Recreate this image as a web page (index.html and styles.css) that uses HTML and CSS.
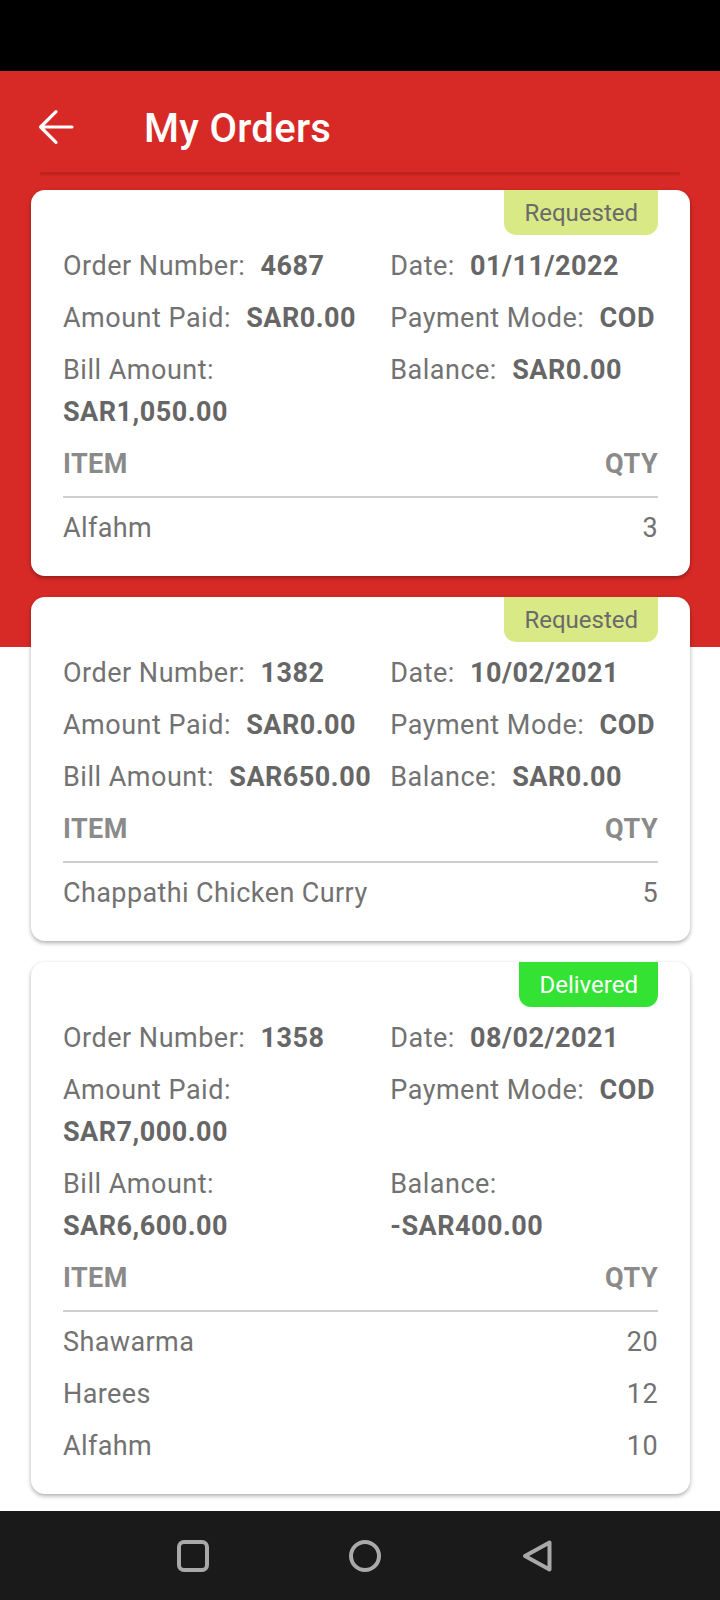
FILE: index.html
```html
<!DOCTYPE html>
<html>
<head>
<meta charset="utf-8">
<link rel="stylesheet" href="styles.css">
</head>
<body>
<div class="statusbar"></div>
<div class="page">
  <div class="appbar">
    <svg class="back" width="48" height="48" viewBox="0 0 24 24"><path d="M20 12H4.6M12 4.3L4.3 12L12 19.7" fill="none" stroke="#fff" stroke-width="1.6" stroke-linecap="round" stroke-linejoin="round"/></svg>
    <h1 class="title">My Orders</h1>
  </div>
  <div class="divider"></div>

  <div class="card">
    <div class="badge req">Requested</div>
    <div class="grid">
      <div class="cell"><span class="lbl">Order Number:</span> <b>4687</b></div>
      <div class="cell"><span class="lbl">Date:</span> <b>01/11/2022</b></div>
      <div class="cell"><span class="lbl">Amount Paid:</span> <b>SAR0.00</b></div>
      <div class="cell"><span class="lbl">Payment Mode:</span> <b>COD</b></div>
      <div class="cell"><span class="lbl">Bill Amount:</span> <b>SAR1,050.00</b></div>
      <div class="cell"><span class="lbl">Balance:</span> <b>SAR0.00</b></div>
    </div>
    <div class="thead"><span>ITEM</span><span>QTY</span></div>
    <div class="items">
      <div class="item"><span>Alfahm</span><span>3</span></div>
    </div>
  </div>

  <div class="card">
    <div class="badge req">Requested</div>
    <div class="grid">
      <div class="cell"><span class="lbl">Order Number:</span> <b>1382</b></div>
      <div class="cell"><span class="lbl">Date:</span> <b>10/02/2021</b></div>
      <div class="cell"><span class="lbl">Amount Paid:</span> <b>SAR0.00</b></div>
      <div class="cell"><span class="lbl">Payment Mode:</span> <b>COD</b></div>
      <div class="cell"><span class="lbl">Bill Amount:</span> <b>SAR650.00</b></div>
      <div class="cell"><span class="lbl">Balance:</span> <b>SAR0.00</b></div>
    </div>
    <div class="thead"><span>ITEM</span><span>QTY</span></div>
    <div class="items">
      <div class="item"><span>Chappathi Chicken Curry</span><span>5</span></div>
    </div>
  </div>

  <div class="card">
    <div class="badge del">Delivered</div>
    <div class="grid">
      <div class="cell"><span class="lbl">Order Number:</span> <b>1358</b></div>
      <div class="cell"><span class="lbl">Date:</span> <b>08/02/2021</b></div>
      <div class="cell"><span class="lbl">Amount Paid:</span> <b>SAR7,000.00</b></div>
      <div class="cell"><span class="lbl">Payment Mode:</span> <b>COD</b></div>
      <div class="cell"><span class="lbl">Bill Amount:</span> <b>SAR6,600.00</b></div>
      <div class="cell"><span class="lbl">Balance:</span> <b>-SAR400.00</b></div>
    </div>
    <div class="thead"><span>ITEM</span><span>QTY</span></div>
    <div class="items">
      <div class="item"><span>Shawarma</span><span>20</span></div>
      <div class="item"><span>Harees</span><span>12</span></div>
      <div class="item"><span>Alfahm</span><span>10</span></div>
    </div>
  </div>
</div>
<div class="navbar">
  <svg width="36" height="36" viewBox="0 0 36 36"><rect x="4" y="4" width="28" height="28" rx="5" fill="none" stroke="#a9a9a9" stroke-width="4"/></svg>
  <svg width="36" height="36" viewBox="0 0 36 36"><circle cx="18" cy="18" r="14" fill="none" stroke="#a9a9a9" stroke-width="4"/></svg>
  <svg width="36" height="36" viewBox="0 0 36 36"><path d="M30.5 4.5V31.5L6 18Z" fill="none" stroke="#a9a9a9" stroke-width="4" stroke-linejoin="round"/></svg>
</div>
</body>
</html>
```
FILE: styles.css
```css
* { box-sizing: border-box; }
html, body {
  margin: 0;
  padding: 0;
}
body {
  width: 720px;
  height: 1600px;
  background: #fff;
  font-family: Roboto, "Noto Sans", sans-serif;
  display: flex;
  flex-direction: column;
  overflow: hidden;
}
.statusbar {
  height: 71px;
  background: #000;
  flex: none;
}
.page {
  flex: 1;
  background: linear-gradient(to bottom, #d72a26 0, #d72a26 576px, #fff 576px);
  display: flex;
  flex-direction: column;
}
.appbar {
  height: 101px;
  padding-top: 10px;
  padding-left: 32px;
  display: flex;
  align-items: center;
}
.back { flex: none; }
.title {
  margin: 0 0 0 64px;
  font-size: 40px;
  letter-spacing: 0.3px;
  font-weight: 500;
  color: #fff;
  line-height: 1;
  position: relative;
  top: 2px;
}
.divider {
  height: 2px;
  margin: 0 40px;
  background: #c0231f;
  box-shadow: 0 1px 2px rgba(0,0,0,0.15);
}
.card {
  margin: 16px 0 0 31px;
  width: 659px;
  background: #fff;
  border-radius: 14px;
  box-shadow: 0 2px 4px rgba(0,0,0,0.32);
  padding: 0 32px 27px;
  display: flex;
  flex-direction: column;
}
.card + .card { margin-top: 21px; }
.badge {
  align-self: flex-end;
  height: 45px;
  line-height: 47px;
  padding: 0 20px;
  font-size: 24px;
  border-radius: 0 0 12px 12px;
}
.badge.req { background: #d9e986; color: #6a6a6a; }
.badge.del { background: #33e233; color: #fff; }
.grid {
  margin-top: 10px;
  display: grid;
  grid-template-columns: 55% 45%;
  row-gap: 10px;
  font-size: 27px;
  letter-spacing: 0.5px;
  line-height: 42px;
}
.cell { color: #666; }
.lbl { color: #727272; margin-right: 8px; }
.cell b { font-weight: 700; color: #666; white-space: nowrap; }
.thead {
  margin-top: 10px;
  display: flex;
  justify-content: space-between;
  font-size: 27px;
  letter-spacing: 0.4px;
  line-height: 42px;
  font-weight: 700;
  color: #8a8a8a;
  padding-bottom: 11px;
  border-bottom: 2px solid #cfcfcf;
}
.items {
  margin-top: 9px;
  display: flex;
  flex-direction: column;
  gap: 10px;
}
.item {
  display: flex;
  justify-content: space-between;
  font-size: 27px;
  letter-spacing: 0.4px;
  line-height: 42px;
  color: #727272;
}
.navbar {
  height: 89px;
  flex: none;
  background: #1a1a1a;
  display: flex;
  align-items: center;
  justify-content: center;
  gap: 136px;
  padding-left: 10px;
}
```
